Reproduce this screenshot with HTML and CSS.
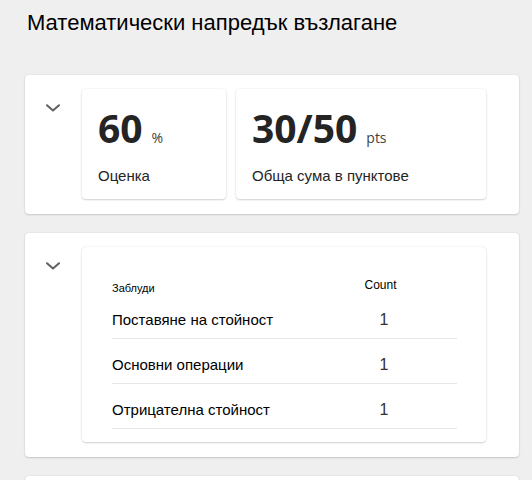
FILE: index.html
```html
<!DOCTYPE html>
<html>

	<head>
		<meta charset="UTF-8">
		<title>Математически напредък възлагане</title>
		<link rel="stylesheet" href="styles.css">
	</head>

	<body>
		<div id="page">
			<h1 class="title">Математически напредък възлагане</h1>

			<!-- резултат -->
			<div class="panel">
				<button class="toggle" type="button">
					<svg width="14" height="8" viewBox="0 0 14 8">
						<path d="M1 1.2 L7 6.6 L13 1.2" fill="none" stroke="#616161" stroke-width="2" stroke-linecap="round" stroke-linejoin="round" />
					</svg>
				</button>
				<div class="panel_body">
					<div class="stat stat_score">
						<div class="stat_value">60<span class="stat_unit">%</span></div>
						<div class="stat_label">Оценка</div>
					</div>
					<div class="stat stat_points">
						<div class="stat_value">30/50<span class="stat_unit">pts</span></div>
						<div class="stat_label">Обща сума в пунктове</div>
					</div>
				</div>
			</div>

			<!-- заблуди -->
			<div class="panel">
				<button class="toggle" type="button">
					<svg width="14" height="8" viewBox="0 0 14 8">
						<path d="M1 1.2 L7 6.6 L13 1.2" fill="none" stroke="#616161" stroke-width="2" stroke-linecap="round" stroke-linejoin="round" />
					</svg>
				</button>
				<div class="panel_body">
					<div class="stat stat_table">
						<div class="mtable">
							<div class="mrow mhead">
								<div class="mname">Заблуди</div>
								<div class="mcount">Count</div>
							</div>
							<div class="mrow">
								<div class="mname">Поставяне на стойност</div>
								<div class="mcount">1</div>
							</div>
							<div class="mrow">
								<div class="mname">Основни операции</div>
								<div class="mcount">1</div>
							</div>
							<div class="mrow">
								<div class="mname">Отрицателна стойност</div>
								<div class="mcount">1</div>
							</div>
						</div>
					</div>
				</div>
			</div>

			<div class="panel panel_next"></div>
		</div>
	</body>

</html>
```

FILE: styles.css
```css
html,
body,
h1 {
	margin: 0;
	padding: 0;
}

body {
	background-color: #efefef;
	font-family: "Liberation Sans", Arial, sans-serif;
	color: #000;
	overflow: hidden;
}

#page {
	width: 494px;
	padding: 9px 0 0 25px;
}

.title {
	font-size: 22px;
	font-weight: normal;
	line-height: 28px;
	padding-left: 2px;
	margin-bottom: 38px;
}

.panel {
	display: flex;
	align-items: flex-start;
	background-color: #fff;
	border-radius: 4px;
	box-shadow: 0 1px 2px rgba(0, 0, 0, .14), 0 0 2px rgba(0, 0, 0, .1);
	padding: 14px 33px 15px 12px;
	margin-bottom: 19px;
}

.panel_next {
	height: 40px;
}

.toggle {
	width: 32px;
	height: 32px;
	margin-top: 3px;
	margin-right: 13px;
	padding: 0;
	border: 0;
	background: none;
	display: flex;
	align-items: center;
	justify-content: center;
	flex-shrink: 0;
}

.panel_body {
	flex: 1;
	display: flex;
	gap: 10px;
}

.stat {
	background-color: #fff;
	border-radius: 4px;
	box-shadow: 0 1px 2px rgba(0, 0, 0, .16), 0 0 2px rgba(0, 0, 0, .1);
	padding: 15px 16px 13px;
	color: #242424;
}

.stat_score {
	width: 112px;
}

.stat_points {
	flex: 1;
}

.stat_value {
	font-family: "Open Sans", "Noto Sans", sans-serif;
	font-weight: bold;
	font-size: 39px;
	line-height: 48px;
	white-space: nowrap;
}

.stat_unit {
	font-weight: normal;
	font-size: 14px;
	line-height: 1;
	color: #424242;
	margin-left: 9px;
}

.stat_label {
	font-size: 15px;
	line-height: 20px;
	margin-top: 14px;
}

/* таблица със заблуди */
.stat_table {
	flex: 1;
	padding: 0 29px 13px 30px;
}

.mrow {
	display: grid;
	grid-template-columns: 1fr 146px;
	border-bottom: 1px solid #e6e6e6;
	padding: 17px 0 9px;
	font-size: 15px;
	line-height: 18px;
	color: #000;
}

.mrow .mcount {
	text-align: center;
	font-size: 16px;
	color: #333;
}

.mhead {
	height: 47px;
	box-sizing: border-box;
	padding: 0;
	border-bottom: 0;
	align-items: end;
}

.mhead .mname {
	font-size: 11px;
	line-height: 12px;
}

.mhead .mcount {
	font-size: 12px;
	line-height: 12px;
	margin-bottom: 3px;
	color: #000;
	padding-right: 7px;
}
```
